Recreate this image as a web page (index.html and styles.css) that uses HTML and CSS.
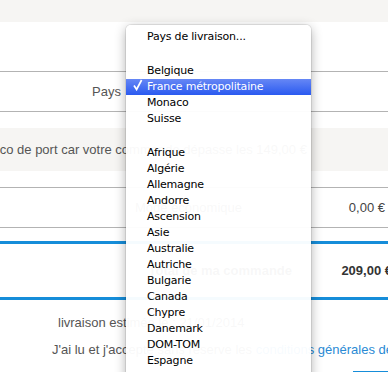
FILE: index.html
```html
<!DOCTYPE html>
<html lang="fr">
<head>
    <meta charset="UTF-8" />
    <title>Livraison</title>
    <link rel="stylesheet" href="styles.css">
</head>
<body>

<div class="top-band"></div>

<div class="row row-pays">
    <span class="label">Pays</span>
    <span class="select"></span>
</div>

<div class="notice">Franco de port car votre commande dépasse les 149,00 €</div>

<div class="row row-mode">
    <span class="mode">Mode économique</span>
    <span class="value">0,00 €</span>
</div>

<div class="row-total">
    <span class="label">Total de ma commande</span>
    <span class="value">209,00 €</span>
</div>

<p class="line-date">livraison estimée le : 21/01/2014</p>
<p class="line-cgv">J'ai lu et j'accepte sans réserve les <a href="#">conditions générales de vente</a></p>

<div class="actions">
    <span class="btn"></span>
</div>

<div class="menu">
    <ul>
        <li>Pays de livraison...</li>
        <li class="sep"></li>
        <li>Belgique</li>
        <li class="selected"><span class="check"><svg width="10" height="12" viewBox="0 0 10 12"><path d="M1 6.5 L3.6 10.5 L8.6 1" fill="none" stroke="#fff" stroke-width="1.7"/></svg></span>France métropolitaine</li>
        <li>Monaco</li>
        <li>Suisse</li>
        <li class="sep"></li>
        <li>Afrique</li>
        <li>Algérie</li>
        <li>Allemagne</li>
        <li>Andorre</li>
        <li>Ascension</li>
        <li>Asie</li>
        <li>Australie</li>
        <li>Autriche</li>
        <li>Bulgarie</li>
        <li>Canada</li>
        <li>Chypre</li>
        <li>Danemark</li>
        <li>DOM-TOM</li>
        <li>Espagne</li>
        <li>Estonie</li>
        <li>Finlande</li>
    </ul>
</div>

</body>
</html>
```

FILE: styles.css
```css
body {
    margin: 0;
    width: 388px;
    height: 372px;
    overflow: hidden;
    position: relative;
    font-family: "Liberation Sans", Arial, sans-serif;
    font-size: 13px;
    color: #555;
    background-color: #fff;
}
.top-band {
    height: 22px;
    background-color: #f6f5f3;
}
.row {
    display: flex;
    align-items: center;
    height: 39px;
    border-top: 1px solid #b3b3b3;
    border-bottom: 1px solid #b3b3b3;
}
.row-pays {
    margin-top: 49px;
}
.row-pays .label {
    width: 121px;
    text-align: right;
}
.notice {
    margin-top: 16px;
    height: 43px;
    line-height: 43px;
    white-space: nowrap;
    text-indent: -27px;
    background-color: #f6f5f3;
}
.row-mode {
    margin-top: 16px;
    padding-left: 135px;
}
.row-mode .value {
    margin-left: auto;
    padding-right: 3px;
    color: #444;
}
.row-total {
    display: flex;
    align-items: center;
    margin-top: 13px;
    height: 53px;
    border-top: 3px solid #168dd9;
    border-bottom: 3px solid #168dd9;
    font-weight: bold;
    color: #333;
    white-space: nowrap;
}
.row-total .label {
    flex: 0 0 292px;
    text-align: right;
}
.row-total .value {
    flex: 0 0 100px;
    text-align: right;
}
.line-date {
    margin: 14px 0 0 58px;
    line-height: 18px;
    white-space: nowrap;
}
.line-cgv {
    margin: 9px 0 0 52px;
    line-height: 18px;
    white-space: nowrap;
}
.line-cgv a {
    color: #2a8ad4;
    text-decoration: none;
}
.actions {
    margin-top: 12px;
    padding-left: 353px;
}
.btn {
    display: block;
    width: 120px;
    height: 30px;
    background-color: #168dd9;
}

/* open select popup */
.menu {
    position: absolute;
    left: 126px;
    top: 25px;
    width: 185px;
    height: 400px;
    background-color: rgba(255, 255, 255, 0.96);
    border-radius: 5px 5px 0 0;
    box-shadow: 0 0 0 1px rgba(0, 0, 0, 0.08), 0 3px 12px rgba(0, 0, 0, 0.32);
    font-family: "DejaVu Sans", Verdana, sans-serif;
    font-size: 11px;
    letter-spacing: -0.2px;
    color: #000;
}
.menu ul {
    list-style: none;
    margin: 0;
    padding: 4px 0;
}
.menu li {
    height: 16px;
    line-height: 16px;
    padding-left: 21px;
    white-space: nowrap;
}
.menu li.sep {
    height: 18px;
}
.menu li.selected {
    color: #fff;
    background: linear-gradient(#6687f5, #2a5af0);
}
.check {
    display: inline-block;
    width: 14px;
    margin-left: -14px;
    vertical-align: -1px;
}
.check svg {
    display: block;
}
```
